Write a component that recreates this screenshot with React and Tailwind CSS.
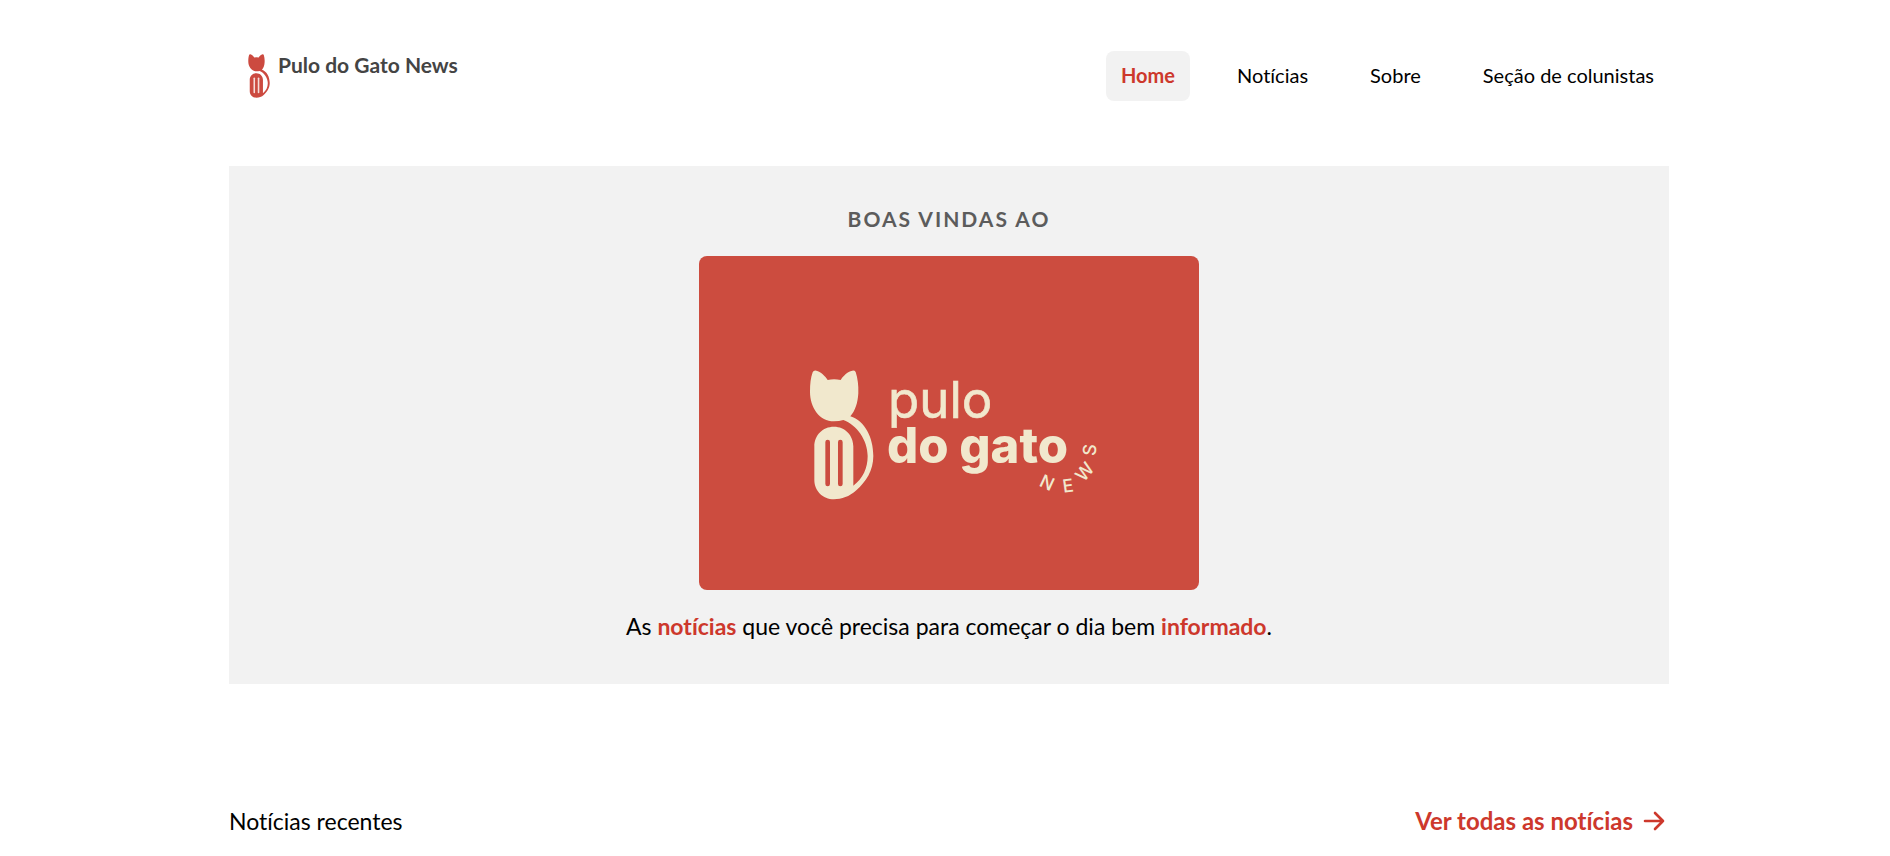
const navItems = [
  { label: "Home", active: true },
  { label: "Notícias" },
  { label: "Sobre" },
  { label: "Seção de colunistas" },
];

function CatShape({ slitColor }) {
  return (
    <>
      <path
        fill="currentColor"
        d="M79 62C92 65 106 78 113 90Q132 86 152 90C159 78 172 65 187 62Q194 61 197 66C203 85 206 105 205 130C203 160 196 182 181 199C225 213 250 263 250 318C250 362 228 395 199 421C178 440 155 448 132 448C98 448 73 422 73 390V289C73 256 98 230 132 230C165 230 190 256 190 289V407C219 386 233 354 233 318C233 270 200 225 160 210Q148 214 132 214C88 214 60 172 60 125C60 102 62 83 68 67Q71 60 79 62Z"
      />
      <rect x="106" y="269" width="14" height="140" rx="7" fill={slitColor} />
      <rect x="144" y="269" width="14" height="140" rx="7" fill={slitColor} />
    </>
  );
}

function HeroLogo() {
  return (
    <svg
      viewBox="0 0 500 334"
      role="img"
      aria-label="Pulo do Gato News"
      className="block w-full max-w-[500px] rounded-lg bg-[#cc4c3f] font-['Inter',sans-serif] text-[#f1e8cd]"
    >
      <g transform="translate(91 94) scale(0.3333)">
        <CatShape slitColor="#cc4c3f" />
      </g>
      <g fill="currentColor">
        <text fontSize="49">
          <tspan x="189" y="162" fontSize="51" stroke="currentColor" strokeWidth="0.6">pulo</tspan>
          <tspan x="188" y="207" fontWeight="800">do gato</tspan>
        </text>
        <g fontSize="18" fontWeight="500" textAnchor="middle">
          <text transform="translate(348 227) rotate(25)" y="6">N</text>
          <text transform="translate(369 230) rotate(-8)" y="6">E</text>
          <text transform="translate(386 216) rotate(-50)" y="6">W</text>
          <text transform="translate(391 194) rotate(-85)" y="6">S</text>
        </g>
      </g>
    </svg>
  );
}

export default function App() {
  return (
    <div className="min-h-screen bg-white pl-2 font-['Lato',sans-serif] text-black [font-variant-ligatures:none]">
      <div className="mx-auto max-w-[1440px]">
        <header className="flex items-start justify-between pt-[51px] pb-[65px]">
          <a href="#" className="flex gap-[7px] pt-[3px] pl-[18px] text-[21px] font-bold text-[#444444]">
            <svg viewBox="56 60 198 390" aria-hidden="true" className="h-11 w-6 text-[#cc4a40]">
              <CatShape slitColor="#f6dcd9" />
            </svg>
            <span className="leading-[22px]">Pulo do Gato News</span>
          </a>
          <nav className="flex gap-8 text-xl leading-5">
            {navItems.map((item) => (
              <a
                key={item.label}
                href="#"
                className={
                  item.active
                    ? "rounded-lg bg-[#f2f2f2] px-[15px] pt-[14px] pb-4 font-bold text-[#cd382c]"
                    : "rounded-lg px-[15px] pt-[14px] pb-4"
                }
              >
                {item.label}
              </a>
            ))}
          </nav>
        </header>

        <main>
          <section className="flex flex-col items-center bg-[#f2f2f2] py-10 text-center">
            <h2 className="text-[21px] leading-[26px] font-bold tracking-[2px] text-[#5c5c5c]">BOAS VINDAS AO</h2>
            <div className="mt-6 flex w-full justify-center">
              <HeroLogo />
            </div>
            <p className="mt-5 mb-[2px] text-[23px] leading-8">
              As <strong className="text-[#cd382c]">notícias</strong> que você precisa para começar o dia bem{" "}
              <strong className="text-[#cd382c]">informado</strong>.
            </p>
          </section>

          <section className="flex items-center justify-between pt-[121px] text-[23px] leading-8">
            <h1>Notícias recentes</h1>
            <a href="#" className="flex items-center gap-2 text-2xl leading-8 font-bold text-[#cd382c]">
              Ver todas as notícias
              <svg
                viewBox="0 0 28 28"
                aria-hidden="true"
                className="size-7"
                fill="none"
                stroke="currentColor"
                strokeWidth="2.6"
                strokeLinecap="round"
                strokeLinejoin="round"
              >
                <path d="M4 14h18M14 6l8 8-8 8" />
              </svg>
            </a>
          </section>
        </main>
      </div>
    </div>
  );
}
